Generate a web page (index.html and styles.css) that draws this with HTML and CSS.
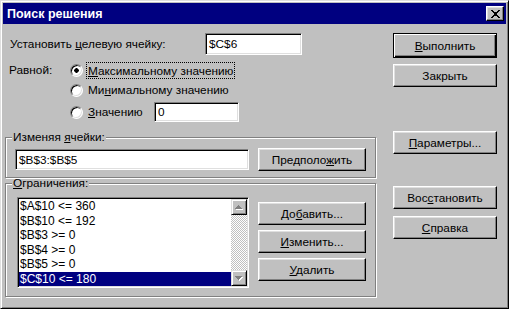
FILE: index.html
```html
<!DOCTYPE html>
<html lang="ru">
<head>
  <meta charset="UTF-8" />
  <title>Поиск решения</title>
  <link rel="stylesheet" href="styles.css">
</head>
<body>
  <div class="window">
    <div class="titlebar">
      <span class="title">Поиск решения</span>
      <button class="close-btn">
        <svg width="9" height="8" viewBox="0 0 8 7" shape-rendering="crispEdges"><path d="M0 0h2v1H0z M6 0h2v1H6z M1 1h2v1H1z M5 1h2v1H5z M2 2h4v1H2z M3 3h2v1H3z M2 4h4v1H2z M1 5h2v1H1z M5 5h2v1H5z M0 6h2v1H0z M6 6h2v1H6z" fill="#000"/></svg>
      </button>
    </div>

    <div class="content">
      <div class="left">
        <div class="target-row">
          <span class="target-label">Установить <u>ц</u>елевую ячейку:</span>
          <div class="field target-field">$C$6</div>
        </div>

        <div class="equal-row">
          <span class="equal-label">Равной:</span>
          <div class="radios">
            <div class="radio-row">
              <span class="radio checked"></span>
              <span class="focus"><u>М</u>аксимальному значению</span>
            </div>
            <div class="radio-row">
              <span class="radio"></span>
              <span class="radio-text">Ми<u>н</u>имальному значению</span>
            </div>
            <div class="radio-row value-row">
              <span class="radio"></span>
              <span class="radio-text value-text"><u>З</u>начению</span>
              <div class="field value-field">0</div>
            </div>
          </div>
        </div>

        <fieldset class="group changing">
          <legend>Изменяя <u>я</u>чейки:</legend>
          <div class="group-inner">
            <div class="field cells-field">$B$3:$B$5</div>
            <button class="btn side-btn">Предполо<u>ж</u>ить</button>
          </div>
        </fieldset>

        <fieldset class="group constraints">
          <legend><u>О</u>граничения:</legend>
          <div class="group-inner">
            <div class="listbox">
              <div class="items">
                <div class="item">$A$10 &lt;= 360</div>
                <div class="item">$B$10 &lt;= 192</div>
                <div class="item">$B$3 &gt;= 0</div>
                <div class="item">$B$4 &gt;= 0</div>
                <div class="item">$B$5 &gt;= 0</div>
                <div class="item selected">$C$10 &lt;= 180</div>
              </div>
              <div class="scrollbar">
                <div class="scroll-btn">
                  <svg width="8" height="5" viewBox="0 0 8 5" shape-rendering="crispEdges"><path d="M4 1h1v1H4z M3 2h3v1H3z M2 3h5v1H2z M1 4h7v1H1z" fill="#fff"/><path d="M3 0h1v1H3z M2 1h3v1H2z M1 2h5v1H1z M0 3h7v1H0z" fill="#808080"/></svg>
                </div>
                <div class="scroll-btn">
                  <svg width="8" height="5" viewBox="0 0 8 5" shape-rendering="crispEdges"><path d="M1 1h7v1H1z M2 2h5v1H2z M3 3h3v1H3z M4 4h1v1H4z" fill="#fff"/><path d="M0 0h7v1H0z M1 1h5v1H1z M2 2h3v1H2z M3 3h1v1H3z" fill="#808080"/></svg>
                </div>
              </div>
            </div>
            <div class="list-buttons">
              <button class="btn side-btn">До<u>б</u>авить...</button>
              <button class="btn side-btn"><u>И</u>зменить...</button>
              <button class="btn side-btn"><u>У</u>далить</button>
            </div>
          </div>
        </fieldset>
      </div>

      <div class="right">
        <button class="btn default"><u>В</u>ыполнить</button>
        <button class="btn close-dlg">Закрыть</button>
        <button class="btn options"><u>П</u>араметры...</button>
        <button class="btn reset">Вос<u>с</u>тановить</button>
        <button class="btn help"><u>С</u>правка</button>
      </div>
    </div>
  </div>
</body>
</html>
```

FILE: styles.css
```css
body {
  margin: 0;
  background: #fff;
  font-family: "Liberation Sans", Arial, sans-serif;
  font-size: 11.8px;
  color: #000;
}

.window {
  width: 509px;
  height: 309px;
  box-sizing: border-box;
  background: #c0c0c0;
  border: 1px solid;
  border-color: #dfdfdf #000 #000 #dfdfdf;
  box-shadow: inset 1px 1px #fff, inset -1px -1px #808080;
  padding: 2px;
}

.titlebar {
  height: 21px;
  background: #000080;
  display: flex;
  align-items: center;
  justify-content: space-between;
  padding: 0 2px 0 4px;
}

.title {
  color: #fff;
  font-weight: bold;
  font-size: 12.5px;
}

.close-btn {
  width: 18px;
  height: 15px;
  padding: 0;
  display: flex;
  align-items: center;
  justify-content: center;
  background: #c0c0c0;
  border: 1px solid;
  border-color: #fff #000 #000 #fff;
  box-shadow: inset -1px -1px #808080, inset 1px 1px #dfdfdf;
}

.content {
  display: flex;
  gap: 17px;
  padding: 9px 0 0 2px;
}

.left {
  width: 371px;
}

.right {
  width: 104px;
  display: flex;
  flex-direction: column;
}

/* raised button */
.btn {
  font: inherit;
  color: #000;
  height: 23px;
  padding: 0;
  background: #c0c0c0;
  border: 1px solid;
  border-color: #fff #000 #000 #fff;
  box-shadow: inset -1px -1px #808080, inset 1px 1px #dfdfdf;
}

.btn.default {
  height: 25px;
  border-color: #000;
  box-shadow: inset 1px 1px #fff, inset -1px -1px #000, inset -2px -2px #808080;
}

.close-dlg { margin-top: 6px; }
.options { margin-top: 44px; }
.reset { margin-top: 32px; }
.help { margin-top: 7px; }

/* sunken edit field */
.field {
  box-sizing: border-box;
  display: flex;
  align-items: center;
  background: #fff;
  padding: 0 3px;
  border: 1px solid;
  border-color: #808080 #fff #fff #808080;
  box-shadow: inset 1px 1px #000, inset -1px -1px #dfdfdf;
}

.target-row {
  display: flex;
  align-items: center;
  height: 22px;
}

.target-label {
  width: 195px;
  padding-left: 5px;
}

.target-field {
  width: 97px;
  height: 22px;
}

.equal-row {
  display: flex;
  margin-top: 5px;
}

.equal-label {
  width: 61px;
  padding-left: 4px;
  line-height: 20px;
}

.radio-row {
  display: flex;
  align-items: center;
  height: 20px;
}

.value-row {
  margin-top: 2px;
}

.radio {
  width: 13px;
  height: 13px;
  box-sizing: border-box;
  border-radius: 50%;
  background: #fff;
  border: 1px solid;
  border-color: #808080 #fff #fff #808080;
  box-shadow: inset 1px 1px #000, inset -1px -1px #dfdfdf;
  margin-right: 5px;
}

.radio.checked {
  background: radial-gradient(circle, #000 0 2px, #fff 2.5px);
}

.focus {
  border: 1px dotted #000;
  padding: 1px 1px 0 1px;
  margin-left: -2px;
}

.value-text {
  width: 66px;
}

.value-field {
  width: 85px;
  height: 20px;
}

/* group boxes */
.group {
  margin: 0;
  padding: 0;
  min-inline-size: 0;
  box-sizing: border-box;
  border: 1px solid #808080;
  box-shadow: inset 1px 1px #fff, 1px 1px #fff;
}

.group legend {
  padding: 0 1px;
  margin-left: 6px;
  line-height: 12px;
  background: #c0c0c0;
}

.group-inner {
  display: flex;
  gap: 9px;
}

.changing {
  margin-top: 9px;
}

.changing .group-inner {
  align-items: center;
  padding: 5px 0 6px 9px;
}

.cells-field {
  width: 234px;
  height: 21px;
}

.side-btn {
  width: 108px;
}

.constraints {
  margin-top: 1px;
}

.constraints legend {
  line-height: 8px;
}

.constraints .group-inner {
  padding: 10px 0 8px 11px;
}

.listbox {
  width: 232px;
  height: 91px;
  box-sizing: border-box;
  display: flex;
  background: #fff;
  border: 1px solid;
  border-color: #808080 #fff #fff #808080;
  box-shadow: inset 1px 1px #000, inset -1px -1px #dfdfdf;
  padding: 1px;
}

.items {
  flex: 1;
  font-size: 12px;
}

.item {
  height: 14.5px;
  line-height: 14.5px;
  padding-left: 1px;
}

.item.selected {
  background: #000080;
  color: #fff;
}

.scrollbar {
  width: 16px;
  display: flex;
  flex-direction: column;
  justify-content: space-between;
  background: repeating-conic-gradient(#fff 0 25%, #c0c0c0 0 50%) 0 0 / 2px 2px;
}

.scroll-btn {
  height: 16px;
  box-sizing: border-box;
  display: flex;
  align-items: center;
  justify-content: center;
  background: #c0c0c0;
  border: 1px solid;
  border-color: #dfdfdf #000 #000 #dfdfdf;
  box-shadow: inset 1px 1px #fff, inset -1px -1px #808080;
}

.list-buttons {
  display: flex;
  flex-direction: column;
  gap: 5px;
  margin-top: 5px;
}
```
